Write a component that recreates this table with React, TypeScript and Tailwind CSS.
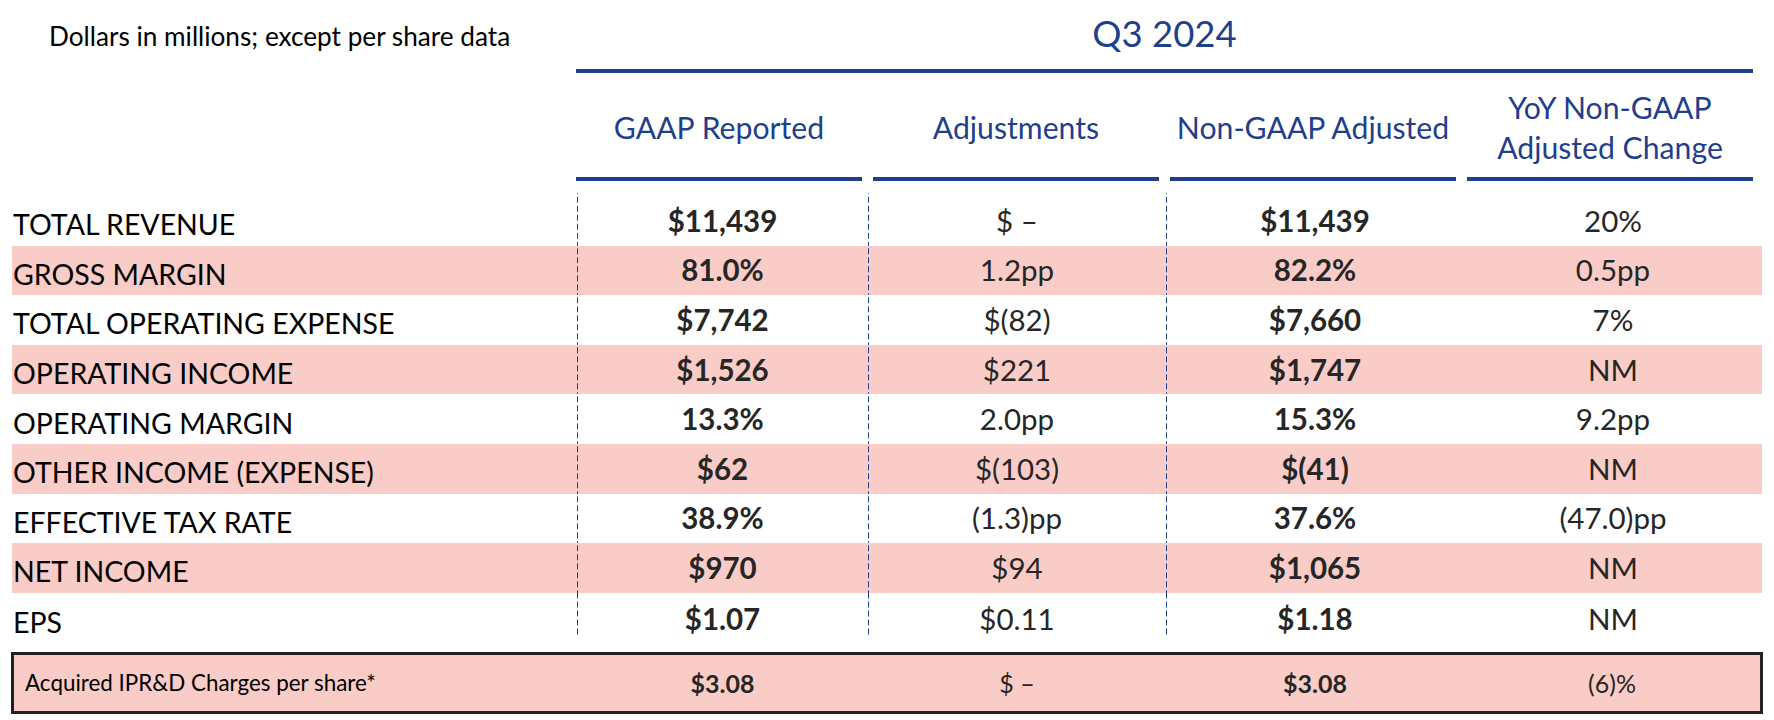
type Row = {
  label: string;
  gaap: string;
  adj: string;
  nonGaap: string;
  yoy: string;
  shaded?: boolean;
};

const rows: Row[] = [
  { label: "TOTAL REVENUE", gaap: "$11,439", adj: "$ –", nonGaap: "$11,439", yoy: "20%" },
  { label: "GROSS MARGIN", gaap: "81.0%", adj: "1.2pp", nonGaap: "82.2%", yoy: "0.5pp", shaded: true },
  { label: "TOTAL OPERATING EXPENSE", gaap: "$7,742", adj: "$(82)", nonGaap: "$7,660", yoy: "7%" },
  { label: "OPERATING INCOME", gaap: "$1,526", adj: "$221", nonGaap: "$1,747", yoy: "NM", shaded: true },
  { label: "OPERATING MARGIN", gaap: "13.3%", adj: "2.0pp", nonGaap: "15.3%", yoy: "9.2pp" },
  { label: "OTHER INCOME (EXPENSE)", gaap: "$62", adj: "$(103)", nonGaap: "$(41)", yoy: "NM", shaded: true },
  { label: "EFFECTIVE TAX RATE", gaap: "38.9%", adj: "(1.3)pp", nonGaap: "37.6%", yoy: "(47.0)pp" },
  { label: "NET INCOME", gaap: "$970", adj: "$94", nonGaap: "$1,065", yoy: "NM", shaded: true },
  { label: "EPS", gaap: "$1.07", adj: "$0.11", nonGaap: "$1.18", yoy: "NM" },
];

const headers = ["GAAP Reported", "Adjustments", "Non-GAAP Adjusted"];

// dashed column rule, drawn as a repeating 1px gradient on the cell's left edge
const rule =
  "bg-[linear-gradient(#1f3f8c_6px,transparent_6px)] bg-[length:1px_9px] bg-left bg-repeat-y";

function DataRow({ row, index }: { row: Row; index: number }) {
  const first = index === 0;
  const last = index === rows.length - 1;
  const height = first ? "h-[52.6px]" : last ? "h-[44px]" : "h-[49.6px]";
  const pad = first ? "pt-[3px]" : last ? "pt-[8px]" : "";
  const cell = `flex items-center justify-center ${rule} ${pad}`;

  return (
    <div className={`flex ${height} ${row.shaded ? "bg-[#f9ccc7]" : ""}`}>
      <div className={`flex w-[565px] items-center pl-px text-[28.5px] text-black ${first ? "pt-[10px]" : last ? "pt-[15px]" : "pt-[7px]"}`}>
        {row.label}
      </div>
      <div className={`${cell} w-[291px] font-bold text-[#262626]`}>{row.gaap}</div>
      <div className={`${cell} w-[298px] text-[#262626]`}>{row.adj}</div>
      <div className={`${cell} w-[298px] font-bold text-[#262626]`}>{row.nonGaap}</div>
      <div className={`flex flex-1 items-center justify-center text-[#262626] ${pad}`}>{row.yoy}</div>
    </div>
  );
}

export default function App() {
  return (
    <div className="h-[720px] w-[1774px] overflow-hidden bg-white font-['Lato','Liberation_Sans',sans-serif]">
      <div className="flex">
        <div className="w-[576px] pl-[49px] pt-[21px] text-[26.2px] leading-[31px] text-black">
          Dollars in millions; except per share data
        </div>
        <div className="w-[1177px]">
          <div className="pt-[11px] text-center text-[36.5px] leading-[44px] text-[#1f3f8c]">Q3 2024</div>
          <div className="mt-[14px] h-[4px] bg-[#1f3f8c]" />
          <div className="grid grid-cols-4 gap-x-[11px] text-[30.2px] leading-[40px] text-[#1f3f8c]">
            {headers.map((h) => (
              <div
                key={h}
                className="flex h-[108px] items-center justify-center border-b-4 border-[#1f3f8c] pt-[4px] text-center"
              >
                {h}
              </div>
            ))}
            <div className="flex h-[108px] items-center justify-center border-b-4 border-[#1f3f8c] pt-[4px] text-center">
              YoY Non-GAAP
              <br />
              Adjusted Change
            </div>
          </div>
        </div>
      </div>

      <div className="mt-[12px] px-[12px] text-[29.5px] leading-[40px]">
        {rows.map((row, i) => (
          <DataRow key={row.label} row={row} index={i} />
        ))}

        <div className="-mx-px mt-[15px] flex h-[62px] border-[3px] border-[#222222] bg-[#f9ccc7] text-[#262626]">
          <div className="flex w-[563px] items-center pl-[11px] text-[22.4px] text-black">
            Acquired IPR&amp;D Charges per share*
          </div>
          <div className="flex w-[291px] items-center justify-center text-[25px] font-bold">$3.08</div>
          <div className="flex w-[298px] items-center justify-center text-[25px]">$ –</div>
          <div className="flex w-[298px] items-center justify-center text-[25px] font-bold">$3.08</div>
          <div className="flex flex-1 items-center justify-center text-[25px]">(6)%</div>
        </div>
      </div>
    </div>
  );
}
